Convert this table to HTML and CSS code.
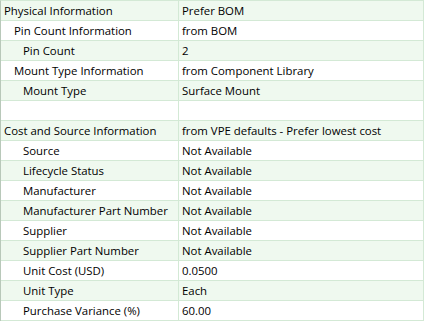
FILE: index.html
```html
<!DOCTYPE html>
<html>
<head>
<meta charset="utf-8">
<link rel="stylesheet" href="styles.css">
</head>
<body>
<div class="grid">
  <div class="row alt"><div class="name l0">Physical Information</div><div class="val">Prefer BOM</div></div>
  <div class="row"><div class="name l1">Pin Count Information</div><div class="val">from BOM</div></div>
  <div class="row alt"><div class="name l2">Pin Count</div><div class="val">2</div></div>
  <div class="row"><div class="name l1">Mount Type Information</div><div class="val">from Component Library</div></div>
  <div class="row alt"><div class="name l2">Mount Type</div><div class="val">Surface Mount</div></div>
  <div class="row"><div class="name l0"></div><div class="val"></div></div>
  <div class="row alt"><div class="name l0">Cost and Source Information</div><div class="val">from VPE defaults - Prefer lowest cost</div></div>
  <div class="row"><div class="name l2">Source</div><div class="val">Not Available</div></div>
  <div class="row alt"><div class="name l2">Lifecycle Status</div><div class="val">Not Available</div></div>
  <div class="row"><div class="name l2">Manufacturer</div><div class="val">Not Available</div></div>
  <div class="row alt"><div class="name l2">Manufacturer Part Number</div><div class="val">Not Available</div></div>
  <div class="row"><div class="name l2">Supplier</div><div class="val">Not Available</div></div>
  <div class="row alt"><div class="name l2">Supplier Part Number</div><div class="val">Not Available</div></div>
  <div class="row"><div class="name l2">Unit Cost (USD)</div><div class="val">0.0500</div></div>
  <div class="row alt"><div class="name l2">Unit Type</div><div class="val">Each</div></div>
  <div class="row"><div class="name l2">Purchase Variance (%)</div><div class="val">60.00</div></div>
</div>
</body>
</html>
```
FILE: styles.css
```css
html, body {
  margin: 0;
  padding: 0;
  background: #ffffff;
}
.grid {
  width: 423px;
  border-top: 1px solid #d3e9d5;
  border-left: 1px solid #b8c8b9;
  font-family: "Open Sans", sans-serif;
  font-size: 11.4px;
  color: #000;
}
.row {
  display: grid;
  grid-template-columns: 178px 245px;
  height: 20px;
  box-sizing: border-box;
  border-bottom: 1px solid #d3e9d5;
  background: #ffffff;
}
.row.alt {
  background: #eff9ef;
}
.name, .val {
  display: flex;
  align-items: center;
  white-space: nowrap;
  overflow: hidden;
  border-right: 1px solid #d3e9d5;
  line-height: 19px;
}
.name { padding-left: 3px; }
.name.l1 { padding-left: 13px; }
.name.l2 { padding-left: 22px; }
.val { padding-left: 3px; }
```
